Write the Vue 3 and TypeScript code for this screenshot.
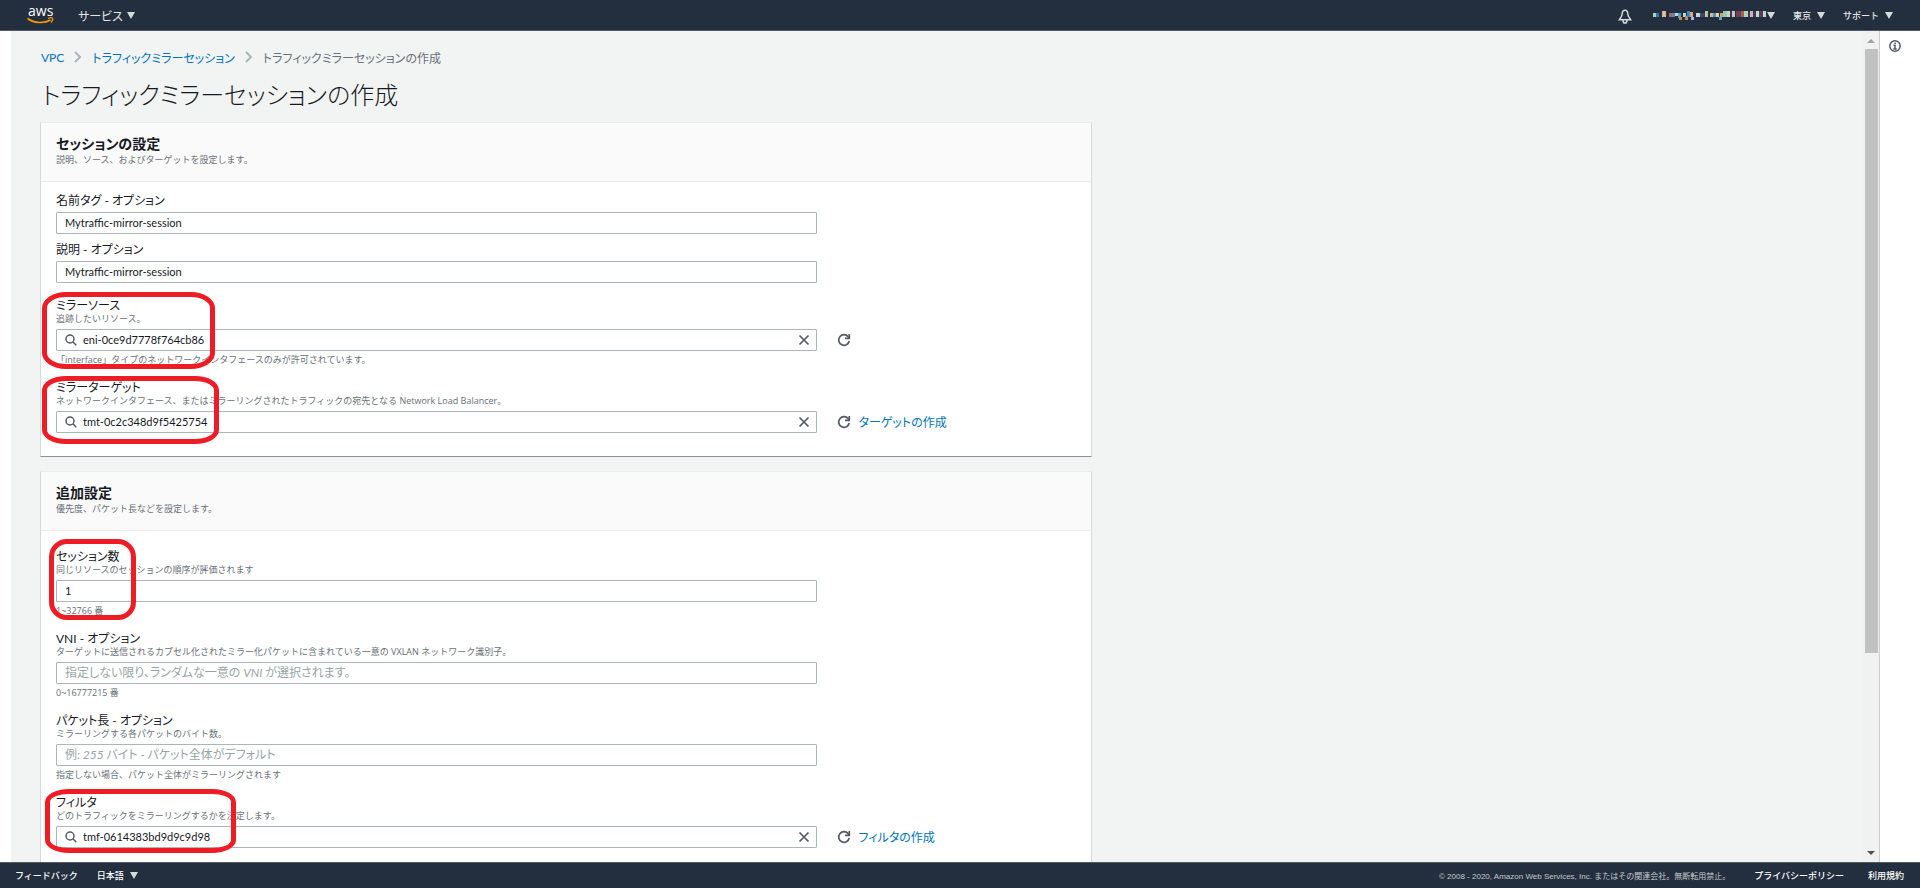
<script setup lang="ts">
import { ref } from 'vue'

interface Mark { x: number; y: number; w: number; h: number; r: string }
interface Field {
  id: string
  label: string
  sub?: string
  value: string
  placeholder?: string
  hint?: string
  search?: boolean
  link?: string
  tight?: boolean
  mark?: Mark
}
interface Card { title: string; desc: string; roomy: boolean; fields: Field[] }

const cards = ref<Card[]>([
  {
    title: 'セッションの設定',
    desc: '説明、ソース、およびターゲットを設定します。',
    roomy: false,
    fields: [
      { id: 'name', label: '名前タグ - オプション', value: 'Mytraffic-mirror-session', tight: true },
      { id: 'description', label: '説明 - オプション', value: 'Mytraffic-mirror-session' },
      {
        id: 'source', label: 'ミラーソース', sub: '追跡したいリソース。', value: 'eni-0ce9d7778f764cb86', search: true,
        hint: '「interface」タイプのネットワークインタフェースのみが許可されています。',
        mark: { x: -14, y: -7, w: 173, h: 77, r: '24px / 16px' },
      },
      {
        id: 'target', label: 'ミラーターゲット',
        sub: 'ネットワークインタフェース、またはミラーリングされたトラフィックの宛先となる Network Load Balancer。',
        value: 'tmt-0c2c348d9f5425754', search: true, link: 'ターゲットの作成',
        mark: { x: -14, y: -5, w: 177, h: 68, r: '24px / 14px' },
      },
    ],
  },
  {
    title: '追加設定',
    desc: '優先度、パケット長などを設定します。',
    roomy: true,
    fields: [
      {
        id: 'number', label: 'セッション数', sub: '同じリソースのセッションの順序が評価されます', value: '1', hint: '1~32766 番',
        mark: { x: -7, y: -11, w: 87, h: 81, r: '18px' },
      },
      {
        id: 'vni', label: 'VNI - オプション',
        sub: 'ターゲットに送信されるカプセル化されたミラー化パケットに含まれている一意の VXLAN ネットワーク識別子。',
        value: '', placeholder: '指定しない限り、ランダムな一意の VNI が選択されます。', hint: '0~16777215 番',
      },
      {
        id: 'length', label: 'パケット長 - オプション', sub: 'ミラーリングする各パケットのバイト数。',
        value: '', placeholder: '例: 255 バイト - パケット全体がデフォルト', hint: '指定しない場合、パケット全体がミラーリングされます',
      },
      {
        id: 'filter', label: 'フィルタ', sub: 'どのトラフィックをミラーリングするかを決定します。',
        value: 'tmf-0614383bd9d9c9d98', search: true, link: 'フィルタの作成',
        mark: { x: -11, y: -7, w: 191, h: 64, r: '24px / 13px' },
      },
    ],
  },
])

// Blocks of the redacted account name: x, y, width, height, colour
const blocks: [number, number, number, number, string][] = [
  [0, 2, 3, 4, '#a8d0c4'], [3, 2, 3, 4, '#2b7cb5'], [9, 0, 4, 6, '#d8bd94'], [13, 2, 3, 4, '#3b2342'],
  [16, 2, 3, 4, '#a36b4f'], [19, 2, 3, 4, '#5a86c9'], [22, 2, 3, 3, '#dfd0b0'], [25, 2, 3, 5, '#4f9bd6'],
  [26, 6, 3, 3, '#c58a3c'], [30, 2, 3, 4, '#b9d6d6'], [32, 5, 3, 4, '#b98a72'], [34, 0, 3, 6, '#3c88c4'],
  [37, 1, 3, 5, '#dba878'], [38, 6, 3, 3, '#9dbfe0'], [43, 2, 4, 4, '#c0dcd2'], [47, 2, 3, 4, '#35478f'],
  [50, 2, 2, 4, '#7b2d3a'], [52, 0, 3, 6, '#a5d0ad'], [57, 2, 3, 4, '#d8b68c'], [60, 2, 3, 4, '#4b94cb'],
  [63, 2, 3, 4, '#e6d4ae'], [66, 6, 3, 3, '#57a8dc'], [67, 2, 3, 4, '#d9a25a'], [70, 0, 4, 6, '#9dc6b4'],
  [74, 0, 3, 6, '#b7dcc9'], [77, 0, 2, 6, '#6c2332'], [79, 0, 3, 6, '#a5d3dc'], [83, 0, 3, 6, '#9b3029'],
  [86, 0, 2, 6, '#314d9b'], [88, 0, 3, 6, '#ba5c33'], [91, 0, 4, 6, '#a5d8b5'], [95, 0, 2, 6, '#762133'],
  [97, 0, 3, 6, '#94c8e2'], [100, 0, 3, 6, '#6a2740'], [103, 0, 3, 6, '#bddcc2'], [106, 0, 2, 6, '#344a8e'],
  [108, 0, 2, 6, '#92263a'], [110, 0, 3, 6, '#b5dfc7'],
]
</script>

<template>
  <div class="console">
    <header class="topbar">
      <a href="#" class="logo" aria-label="aws">
        <svg width="28" height="30" viewBox="0 0 28 30">
          <text x="1" y="16" class="logo-text">aws</text>
          <path d="M0.500 18.500C7.500 23.500 17.500 23.500 23.500 20" fill="none" stroke="#f90" stroke-width="1.600" />
          <path d="M21 18.500c2-.800 4-.900 4.500-.300s-.200 2.800-1.500 4.300" fill="none" stroke="#f90" stroke-width="1.200" />
        </svg>
      </a>
      <button class="nav services">サービス<i class="caret"></i></button>
      <span class="grow"></span>
      <button class="nav bell" aria-label="通知">
        <svg width="14" height="15" viewBox="0 0 14 15" fill="none" stroke="#d5dbdb" stroke-width="1.500">
          <path d="M7 1.200C4.800 1.200 4.200 3 4.100 5.200C4 8 2.500 8.800 1.300 10.800H12.700C11.500 8.800 10 8 9.900 5.200C9.800 3 9.200 1.200 7 1.200Z" />
          <path d="M5.200 11v1.200a1.800 1.800 0 0 0 3.600 0V11" />
        </svg>
      </button>
      <button class="nav account" aria-label="アカウント">
        <svg width="113" height="9" viewBox="0 0 113 9" shape-rendering="crispEdges">
          <rect v-for="b in blocks" :key="b[0]" :x="b[0]" :y="b[1]" :width="b[2]" :height="b[3]" :fill="b[4]" />
        </svg>
        <i class="caret"></i>
      </button>
      <button class="nav small region">東京<i class="caret"></i></button>
      <button class="nav small">サポート<i class="caret"></i></button>
    </header>

    <div class="middle">
      <main class="scroll">
        <nav class="crumbs">
          <a href="#">VPC</a>
          <svg width="8" height="12" viewBox="0 0 8 12"><path d="M1 1l5 5-5 5" /></svg>
          <a href="#">トラフィックミラーセッション</a>
          <svg width="8" height="12" viewBox="0 0 8 12"><path d="M1 1l5 5-5 5" /></svg>
          <span>トラフィックミラーセッションの作成</span>
        </nav>
        <h1>トラフィックミラーセッションの作成</h1>

        <section v-for="card in cards" :key="card.title" class="card">
          <div class="card-head">
            <h2>{{ card.title }}</h2>
            <p class="note">{{ card.desc }}</p>
          </div>
          <div class="card-body" :class="{ roomy: card.roomy }">
            <div v-for="f in card.fields" :key="f.id" class="field" :class="{ tight: f.tight }">
              <label :for="f.id">{{ f.label }}</label>
              <p v-if="f.sub" class="note">{{ f.sub }}</p>
              <div class="row">
                <div class="box">
                  <svg v-if="f.search" class="lens" width="12" height="12" viewBox="0 0 12 12">
                    <circle cx="5" cy="5" r="4" /><path d="M8 8l3.300 3.300" />
                  </svg>
                  <input :id="f.id" v-model="f.value" type="text" :placeholder="f.placeholder" />
                  <button v-if="f.search" class="icon" aria-label="クリア" @click="f.value = ''">
                    <svg width="12" height="12" viewBox="0 0 12 12"><path d="M1.500 1.500l9 9M10.500 1.500l-9 9" /></svg>
                  </button>
                </div>
                <div v-if="f.search" class="side">
                  <button class="icon" aria-label="更新">
                    <svg width="14" height="14" viewBox="0 0 14 14">
                      <path d="M12.200 8A5.300 5.300 0 1 1 11.200 3.800L12.200 5" /><path d="M12.300 1v4.300H8" />
                    </svg>
                  </button>
                  <a v-if="f.link" href="#">{{ f.link }}</a>
                </div>
              </div>
              <p v-if="f.hint" class="note hint">{{ f.hint }}</p>
              <span
                v-if="f.mark"
                class="mark"
                :style="{ left: f.mark.x + 'px', top: f.mark.y + 'px', width: f.mark.w + 'px', height: f.mark.h + 'px', borderRadius: f.mark.r }"
              ></span>
            </div>
          </div>
        </section>
      </main>
      <div class="track" aria-hidden="true">
        <i class="arrow up"></i>
        <div class="thumb"></div>
        <i class="arrow down"></i>
      </div>
      <aside class="help">
        <button class="icon" aria-label="情報">
          <svg width="12" height="12" viewBox="0 0 12 12">
            <circle cx="6" cy="6" r="5.200" /><path d="M6 2.500v1.500M4.500 5.300H6V9M4.300 9h3.400" />
          </svg>
        </button>
      </aside>
    </div>

    <footer class="bottombar">
      <a href="#">フィードバック</a>
      <button class="nav small lang">日本語<i class="caret"></i></button>
      <span class="grow"></span>
      <span class="legal">© 2008 - 2020, Amazon Web Services, Inc. またはその関連会社。無断転用禁止。</span>
      <a href="#">プライバシーポリシー</a>
      <a href="#">利用規約</a>
    </footer>
  </div>
</template>

<style>
body { margin: 0; }
</style>

<style scoped>
.console {
  height: 100vh;
  display: flex;
  flex-direction: column;
  overflow: hidden;
  background: #fff;
  color: #16191f;
  font-family: Lato, "Noto Sans CJK JP", sans-serif;
  font-size: 12px;
  font-feature-settings: "palt";
}
* { box-sizing: border-box; }
h1, h2, p { margin: 0; }
a { color: #0073bb; text-decoration: none; }
button { font: inherit; font-feature-settings: inherit; border: 0; padding: 0; background: none; color: inherit; cursor: pointer; }
.grow { flex: 1; }

.topbar { flex: none; height: 31px; display: flex; align-items: center; padding: 0 27px; background: #232f3e; border-bottom: 1px solid #545b64; color: #e4e8e8; }
.logo { display: flex; margin-right: 23px; }
.logo-text { font: 400 14px "Open Sans", sans-serif; fill: #fff; }
.nav { display: flex; align-items: center; gap: 6px; }
.services { gap: 4px; }
.small { font-size: 9px; font-weight: 500; font-feature-settings: normal; }
.caret { width: 0; height: 0; border: 4px solid transparent; border-top: 7px solid #d5dbdb; border-bottom: 0; }
.bell { margin-right: 21px; padding-top: 3px; }
.bell svg, .account svg { display: block; }
.account { gap: 1px; margin-right: 18px; }
.region { margin-right: 18px; }

.middle { flex: 1; min-height: 0; display: flex; padding-left: 11px; }
.scroll { flex: 1; min-width: 0; overflow: hidden; background: #f2f3f3; padding: 17px 29px 0; }
.crumbs { display: flex; align-items: center; gap: 10px; height: 18px; padding-left: 1px; color: #687078; }
.crumbs svg { fill: none; stroke: #aab7b8; stroke-width: 2; }
h1 { font-size: 24px; line-height: 32px; font-weight: 300; margin: 13px 2px 11px; }
.card { width: 100%; max-width: 1052px; margin-bottom: 14px; background: #fff; border: 1px solid #d5dbdb; border-top-color: #eaeded; border-bottom-color: #879596; }
.card-head { height: 59px; padding: 12px 15px 0; background: #fafafa; border-bottom: 1px solid #eaeded; }
h2 { font-size: 14px; line-height: 18px; font-weight: 700; margin-bottom: 1px; }
.note { font-size: 9px; line-height: 12px; color: #687078; font-family: "Open Sans", "Noto Sans CJK JP", sans-serif; font-feature-settings: normal; }
.card-body { display: flex; flex-direction: column; gap: 16px; padding: 12px 15px 23px; }
.card-body.roomy { padding-top: 19px; }
.field { position: relative; }
.field.tight { margin-bottom: -7px; }
.field > label { display: block; line-height: 14px; }
.row { display: grid; grid-template-columns: minmax(0, 3fr) minmax(0, 1fr); gap: 6px; margin-top: 4px; }
.box { display: flex; align-items: center; height: 22px; border: 1px solid #aab7b8; border-radius: 1px; padding: 0 6px 0 8px; background: #fff; }
.lens { margin-right: 6px; fill: none; stroke: #545b64; stroke-width: 1.500; }
input { flex: 1; min-width: 0; height: 20px; border: 0; padding: 0 0 2px; outline: 0; background: none; font: inherit; font-size: 11px; color: #16191f; font-feature-settings: inherit; }
input::placeholder { color: #95a5a6; opacity: 1; font-style: italic; font-synthesis: none; font-size: 12px; }
.icon svg { display: block; fill: none; stroke: #545b64; stroke-width: 1.700; }
.side { display: flex; align-items: center; gap: 8px; padding-left: 14px; }
.side a { padding-bottom: 2px; }
.hint { margin: 3px 0 -1px; }
.mark { position: absolute; border: 5px solid #ee1c24; pointer-events: none; }

.track { flex: none; width: 16px; display: flex; flex-direction: column; align-items: center; background: #f1f1f1; padding: 8px 0 7px; }
.arrow { width: 0; height: 0; border: 4px solid transparent; }
.arrow.up { border-top: 0; border-bottom-color: #a3a3a3; }
.arrow.down { border-bottom: 0; border-top-color: #505050; margin-top: auto; }
.thumb { width: 13px; height: 74%; margin-top: 6px; background: #c1c1c1; }
.help { flex: none; width: 41px; border-left: 1px solid #ccc; padding: 9px 0 0 9px; }
.help svg { stroke-width: 1.500; }

.bottombar { flex: none; height: 26px; display: flex; align-items: center; padding: 0 16px 0 15px; background: #232f3e; border-top: 1px solid #545b64; color: #fff; font-size: 9px; font-weight: 500; font-feature-settings: normal; }
.bottombar a { color: #fff; }
.lang { margin-left: 19px; }
.legal { color: #c3c9cc; font-family: "Liberation Sans", "Noto Sans CJK JP", sans-serif; font-size: 8px; font-weight: 400; }
.legal ~ a { margin-left: 24px; }
</style>
